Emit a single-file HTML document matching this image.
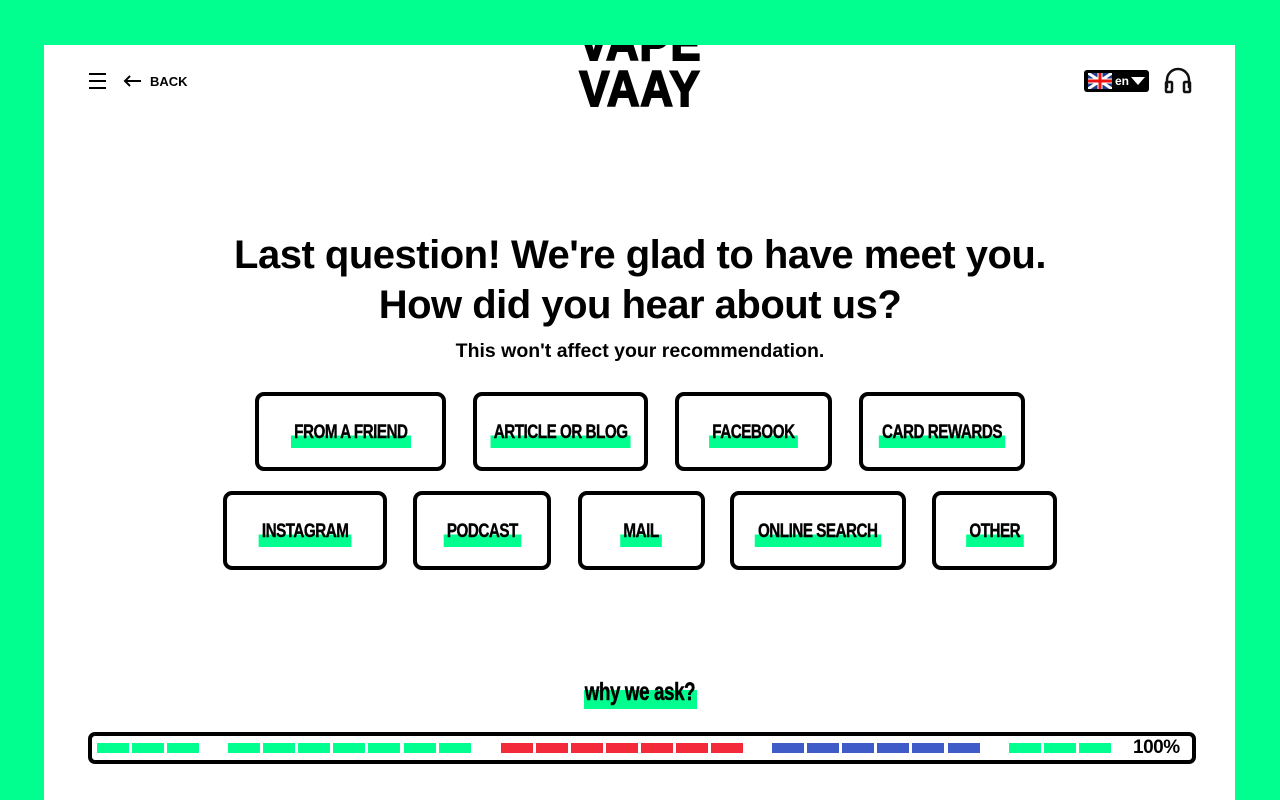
<!DOCTYPE html>
<html><head><meta charset="utf-8"><style>
*{margin:0;padding:0;box-sizing:border-box}
body{width:1280px;height:800px;background:#00ff8f;position:relative;overflow:hidden;font-family:"Liberation Sans",sans-serif;color:#000}
#card{position:absolute;left:44px;top:45px;width:1191px;height:755px;background:#fff;overflow:hidden}
.abs{position:absolute}
.btn{position:absolute;border:4px solid #000;border-radius:9px;display:flex;align-items:center;justify-content:center}
.lbl{font-weight:bold;font-size:19px;letter-spacing:-0.6px;padding:0 4px 5px;background:linear-gradient(transparent 50%,#00ff8f 50%);line-height:20px;margin-top:8px;transform:scaleX(0.8);white-space:nowrap;-webkit-text-stroke:0.4px #000}
h1{position:absolute;left:0;width:1280px;text-align:center;font-size:40px;font-weight:bold;line-height:50px;letter-spacing:-0.5px}
.seg{position:absolute;top:743px;height:10px;width:32px}
</style></head><body>
<div id="card"></div>
<div class="abs" style="left:570px;top:18px;width:140px;height:92px;overflow:hidden">
<div style="width:140px;text-align:center;font-weight:bold;font-size:50px;line-height:46px;letter-spacing:1px;transform:scaleX(0.9);white-space:nowrap;margin-top:2px;-webkit-text-stroke:2px #000">VAPE<br>VAAY</div></div>
<div class="abs" style="left:0;top:0;width:1280px;height:45px;background:#00ff8f"></div>
<!-- header -->
<div class="abs" style="left:89px;top:73px;width:17px;height:2px;background:#000"></div>
<div class="abs" style="left:89px;top:80px;width:17px;height:2px;background:#000"></div>
<div class="abs" style="left:89px;top:87px;width:17px;height:2px;background:#000"></div>
<svg class="abs" style="left:123px;top:74px" width="20" height="14" viewBox="0 0 20 14"><path d="M18 7H2M7 2L2 7l5 5" stroke="#000" stroke-width="2" fill="none"/></svg>
<div class="abs" style="left:150px;top:74px;font-size:13px;font-weight:bold">BACK</div>
<div class="abs" style="left:1084px;top:70px;width:65px;height:22px;background:#000;border-radius:3px"></div>
<svg class="abs" style="left:1088px;top:73px" width="24" height="16" viewBox="0 0 24 16"><rect width="24" height="16" fill="#1e3a8a"/><path d="M0 0L24 16M24 0L0 16" stroke="#fff" stroke-width="3"/><path d="M12 0V16M0 8H24" stroke="#fff" stroke-width="5"/><path d="M12 0V16M0 8H24" stroke="#e11" stroke-width="3"/></svg>
<div class="abs" style="left:1115px;top:74px;color:#fff;font-size:12px;font-weight:bold">en</div>
<svg class="abs" style="left:1131px;top:77px" width="14" height="9"><path d="M0 0H14L7 8Z" fill="#fff"/></svg>
<svg class="abs" style="left:1164px;top:66px" width="28" height="28" viewBox="0 0 28 28"><path d="M3 22V14a11 11 0 0 1 22 0v8" stroke="#111" stroke-width="2.5" fill="none"/><rect x="2" y="16" width="6" height="10" rx="1" fill="none" stroke="#111" stroke-width="2.5"/><rect x="20" y="16" width="6" height="10" rx="1" fill="none" stroke="#111" stroke-width="2.5"/></svg>
<!-- titles -->
<h1 style="top:230px">Last question! We're glad to have meet you.</h1>
<h1 style="top:280px">How did you hear about us?</h1>
<div class="abs" style="left:0;width:1280px;top:340px;text-align:center;font-size:19.5px;font-weight:bold">This won't affect your recommendation.</div>
<!-- buttons -->
<div class="btn" style="left:255px;top:392px;width:191px;height:79px"><span class="lbl">FROM A FRIEND</span></div>
<div class="btn" style="left:473px;top:392px;width:175px;height:79px"><span class="lbl">ARTICLE OR BLOG</span></div>
<div class="btn" style="left:675px;top:392px;width:157px;height:79px"><span class="lbl">FACEBOOK</span></div>
<div class="btn" style="left:859px;top:392px;width:166px;height:79px"><span class="lbl">CARD REWARDS</span></div>
<div class="btn" style="left:223px;top:491px;width:164px;height:79px"><span class="lbl">INSTAGRAM</span></div>
<div class="btn" style="left:413px;top:491px;width:138px;height:79px"><span class="lbl">PODCAST</span></div>
<div class="btn" style="left:578px;top:491px;width:127px;height:79px"><span class="lbl">MAIL</span></div>
<div class="btn" style="left:730px;top:491px;width:176px;height:79px"><span class="lbl">ONLINE SEARCH</span></div>
<div class="btn" style="left:932px;top:491px;width:125px;height:79px"><span class="lbl">OTHER</span></div>
<!-- why -->
<div class="abs" style="left:584px;top:690px;width:113px;height:19px;background:#00ff8f"></div>
<div class="abs" style="left:540px;width:200px;top:678px;text-align:center;font-weight:bold;font-size:25px;letter-spacing:-0.5px;white-space:nowrap;transform:scaleX(0.75);-webkit-text-stroke:0.5px #000">why we ask?</div>
<!-- progress -->
<div class="abs" style="left:88px;top:732px;width:1108px;height:32px;border:4px solid #000;border-radius:7px"></div>
<div class="seg" style="left:97px;background:#00ff8f"></div><div class="seg" style="left:132px;background:#00ff8f"></div><div class="seg" style="left:167px;background:#00ff8f"></div>
<div class="seg" style="left:228px;background:#00ff8f"></div><div class="seg" style="left:263px;background:#00ff8f"></div><div class="seg" style="left:298px;background:#00ff8f"></div><div class="seg" style="left:333px;background:#00ff8f"></div><div class="seg" style="left:368px;background:#00ff8f"></div><div class="seg" style="left:404px;background:#00ff8f"></div><div class="seg" style="left:439px;background:#00ff8f"></div>
<div class="seg" style="left:501px;background:#f22a3a"></div><div class="seg" style="left:536px;background:#f22a3a"></div><div class="seg" style="left:571px;background:#f22a3a"></div><div class="seg" style="left:606px;background:#f22a3a"></div><div class="seg" style="left:641px;background:#f22a3a"></div><div class="seg" style="left:676px;background:#f22a3a"></div><div class="seg" style="left:711px;background:#f22a3a"></div>
<div class="seg" style="left:772px;background:#3f5bc8"></div><div class="seg" style="left:807px;background:#3f5bc8"></div><div class="seg" style="left:842px;background:#3f5bc8"></div><div class="seg" style="left:877px;background:#3f5bc8"></div><div class="seg" style="left:912px;background:#3f5bc8"></div><div class="seg" style="left:948px;background:#3f5bc8"></div>
<div class="seg" style="left:1009px;background:#00ff8f"></div><div class="seg" style="left:1044px;background:#00ff8f"></div><div class="seg" style="left:1079px;background:#00ff8f"></div>
<div class="abs" style="left:1133px;top:737px;font-size:19px;font-weight:bold;letter-spacing:-0.5px">100%</div>
</body></html>
